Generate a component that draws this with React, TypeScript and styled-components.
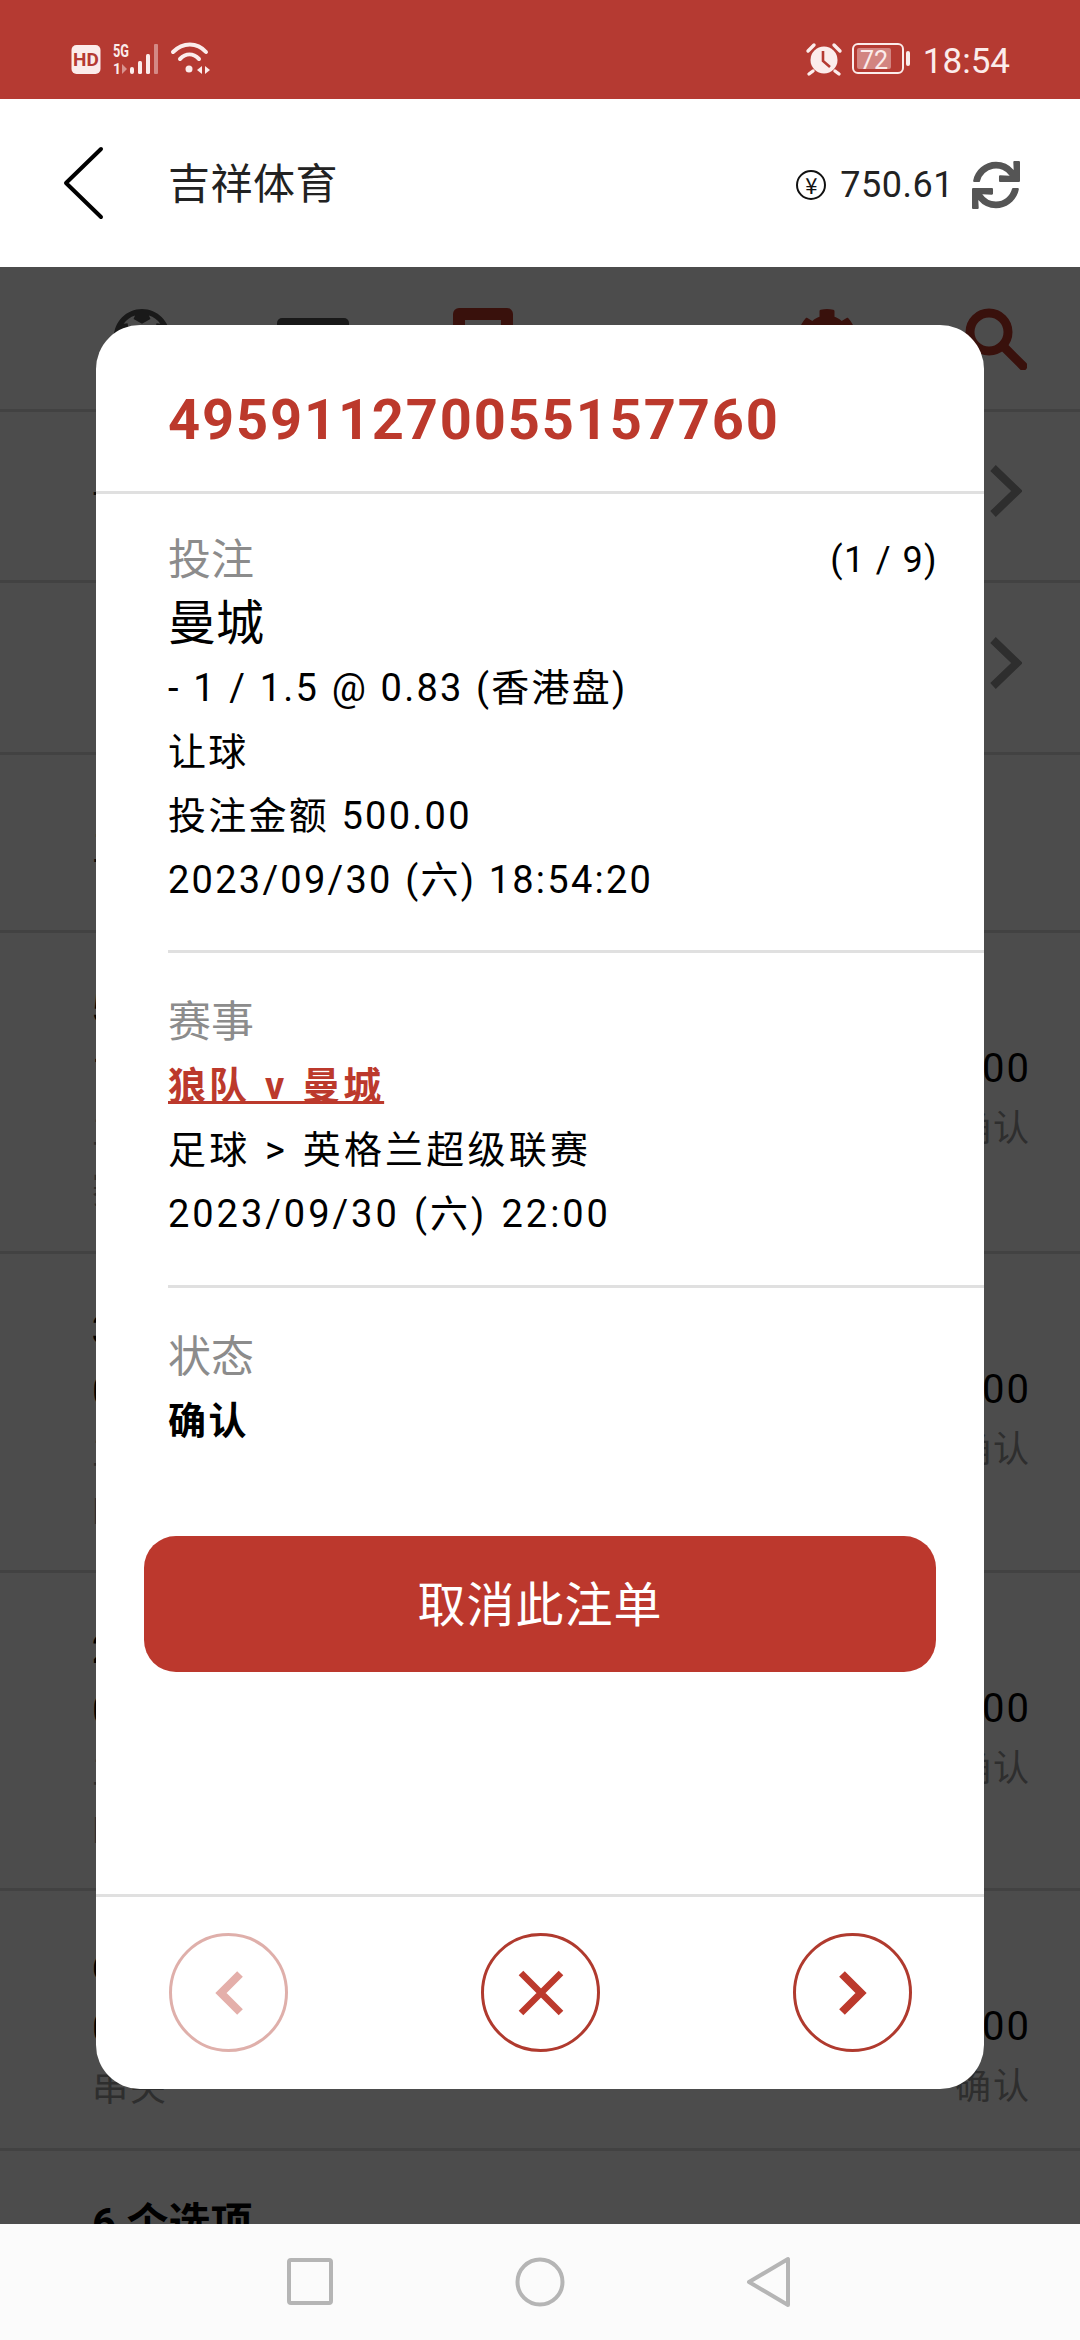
import React from "react";
import styled, { createGlobalStyle } from "styled-components";
import { FaSync, FaFutbol, FaCog } from "react-icons/fa";

const Global = createGlobalStyle`
  html, body { margin: 0; padding: 0; background: #fff; }
  * { box-sizing: border-box; }
  body { font-family: Roboto, "Noto Sans CJK SC", sans-serif; }
`;

const Screen = styled.div`
  width: 1080px; height: 2340px; display: flex; flex-direction: column; overflow: hidden;
`;

const StatusBar = styled.div`
  height: 99px; flex: none; background: #b53a32; color: #fbeceb;
  display: flex; justify-content: space-between; align-items: flex-start;
  padding: 42px 70px 0 71px;
  svg { overflow: visible; }
`;
const StatusGroup = styled.div`display: flex; align-items: flex-start; gap: 10px;`;
const Clock = styled.span`font-size: 35px; line-height: 36px; margin-left: 1px; margin-top: 2px;`;

const Header = styled.header`
  height: 168px; flex: none; background: #fff; display: flex; align-items: center; padding: 4px 60px 0 62px;
`;
const BackIcon = styled.svg`width: 44px; height: 76px; flex: none; margin-top: -5px;`;
const HeaderTitle = styled.h1`
  margin: 0 0 0 62px; flex: 1; font-size: 42px; font-weight: 400; color: #222; line-height: 48px; letter-spacing: 0.5px;
`;
const Balance = styled.div`display: flex; align-items: center; color: #222; font-size: 36px; letter-spacing: 0.5px;`;
const Yen = styled.span`
  width: 30px; height: 30px; border: 2px solid #111; border-radius: 50%; color: #111; font-size: 22px; line-height: 25px;
  text-align: center; letter-spacing: 0; margin-right: 14px; font-family: "Noto Sans CJK SC", sans-serif;
`;
const Refresh = styled(FaSync)`width: 48px; height: 48px; color: #555; margin-left: 18px;`;

const Body = styled.main`position: relative; flex: 1; min-height: 0; overflow: hidden; background: #fff;`;
const TabBar = styled.nav`
  height: 145px; display: flex; justify-content: space-between; padding: 41px 55px 0 112px; border-bottom: 3px solid #ddd;
`;
const Tab = styled.div<{ $red?: boolean }>`
  width: 60px; height: 60px; display: flex; justify-content: center; color: ${p => (p.$red ? "#c0392b" : "#555")};
  svg { flex: none; }
`;
const MenuRow = styled.div<{ $h: number }>`
  height: ${p => p.$h}px; border-bottom: 3px solid #ddd; display: flex; align-items: center; justify-content: space-between;
  padding: 0 58px 0 92px; font-size: 40px; color: #222;
`;
const Chevron = styled.svg`width: 32px; height: 54px; flex: none; color: #999; margin-bottom: 10px;`;
const BetRow = styled.div<{ $h: number }>`
  height: ${p => p.$h}px; border-bottom: 3px solid #ddd; display: flex; justify-content: space-between; padding: 46px 49px 0 92px;
`;
const BetLeft = styled.div`display: flex; flex-direction: column;`;
const BetRight = styled.div`display: flex; flex-direction: column; align-items: flex-end; padding-top: 60px;`;
const BetTitle = styled.div`font-size: 40px; line-height: 61px; font-weight: 700; color: #000;`;
const BetLine = styled.div`font-size: 40px; line-height: 61px; color: #000;`;
const BetSub = styled.div`font-size: 36px; line-height: 60px; color: #999; letter-spacing: 2px;`;
const Amount = styled.div`font-size: 40px; line-height: 60px; color: #000; letter-spacing: 2px;`;
const Options = styled.div`padding: 48px 92px; font-size: 42px; line-height: 50px; font-weight: 700; color: #000;`;

const Overlay = styled.div`
  position: absolute; inset: 0; background: rgba(0, 0, 0, 0.7); display: flex; justify-content: center; padding-top: 58px;
`;
const Modal = styled.section`
  width: 888px; height: 1764px; background: #fff; border-radius: 44px; display: flex; flex-direction: column; overflow: hidden;
`;
const ModalHead = styled.div`
  height: 169px; flex: none; border-bottom: 3px solid #e0e0e0; padding: 62px 0 0 72px;
  font-size: 56px; line-height: 66px; font-weight: 700; color: #bc392c; letter-spacing: 1.85px;
`;
const Section = styled.div<{ $top: number; $bottom?: number }>`
  position: relative; margin-left: 72px; padding: ${p => p.$top}px 0 ${p => p.$bottom ?? 0}px 0;
  border-bottom: ${p => (p.$bottom ? "3px solid #e0e0e0" : "none")};
`;
const Label = styled.div`font-size: 43px; line-height: 64px; color: #8c8c8c;`;
const Counter = styled.div`
  position: absolute; right: 46px; top: 34px; font-size: 36px; line-height: 64px; color: #000; letter-spacing: 1.4px;
`;
const Pick = styled.div`font-size: 48px; line-height: 64px; color: #000;`;
const Line = styled.div<{ $spacing?: number; $words?: number }>`
  font-size: 38px; line-height: 64px; color: #000;
  letter-spacing: ${p => p.$spacing ?? 2.25}px; word-spacing: ${p => p.$words ?? 0.8}px;
`;
const MatchLink = styled.a`
  display: block; font-size: 38px; line-height: 64px; font-weight: 700; color: #bc392c; text-decoration: underline;
  letter-spacing: 3px; word-spacing: 2.5px;
`;
const Strong = styled.div`font-size: 38px; line-height: 64px; font-weight: 700; color: #000; letter-spacing: 2.5px;`;
const CancelButton = styled.button`
  flex: none; margin: 83px 48px 0; height: 136px; border: none; border-radius: 32px; background: #bc382d; color: #fff;
  padding: 3px 0 0; font: 400 48px/1 Roboto, "Noto Sans CJK SC", sans-serif; letter-spacing: 1px;
`;
const Spacer = styled.div`flex: 1;`;
const ModalFoot = styled.footer`
  height: 195px; flex: none; border-top: 3px solid #e0e0e0; display: flex; justify-content: space-between; padding: 36px 72px 0 73px;
`;
const Circle = styled.button<{ $off?: boolean }>`
  width: 119px; height: 119px; border-radius: 50%; border: 3px solid #b03a2e; background: #fff; padding: 0;
  display: flex; align-items: center; justify-content: center; opacity: ${p => (p.$off ? 0.4 : 1)};
  svg { display: block; }
`;

const NavBar = styled.nav`
  height: 116px; flex: none; background: #fbfbfb; display: flex; justify-content: center; align-items: center; gap: 170px;
`;
const NavIcon = styled.svg`width: 60px; height: 60px; fill: none; stroke: #b5b5b5; stroke-width: 4;`;

const ScoreBets = [
  { h: 321, lines: ["5 个选项", "1 / 1.5", "主队", "赛果"] },
  { h: 319, lines: ["3 个选项", "0.00", "主队", "HK"] },
  { h: 318, lines: ["2 个选项", "0.00", "主队", "HK"] },
  { h: 260, lines: ["6 个选项", "0.00", "串关"] },
];

export default function App() {
  return (
    <Screen>
      <Global />
      <StatusBar>
        <StatusGroup>
          <svg width="30" height="32" viewBox="0 0 30 32">
            <rect x="0.5" y="3" width="29" height="29" rx="5" fill="#fbeceb" />
            <text x="15" y="24" textAnchor="middle" fontSize="19" fontWeight="700" fontFamily="Roboto" fill="#b53a32">HD</text>
          </svg>
          <svg width="50" height="34" viewBox="0 0 48 34" fill="#fbeceb" style={{ marginLeft: 1 }}>
            <text x="0" y="15" fontSize="19" fontWeight="700" fontFamily="Roboto" textLength="16" lengthAdjust="spacingAndGlyphs">5G</text>
            <text x="0" y="32" fontSize="14" fontWeight="700" fontFamily="Roboto">1</text>
            <path d="M9 22l5 5-5 5z" opacity="0.5" />
            <rect x="17" y="25" width="4" height="7" rx="2" />
            <rect x="25" y="19" width="4" height="13" rx="1.5" />
            <rect x="33" y="12" width="4" height="20" rx="1.5" />
            <rect x="41" y="2" width="4" height="30" rx="1" opacity="0.45" />
          </svg>
          <svg width="40" height="34" viewBox="0 0 40 34" fill="none" stroke="#fbeceb" strokeWidth="4" strokeLinecap="round" style={{ marginLeft: -1 }}>
            <path d="M2 10C12 0 26 0 35 10" />
            <path d="M9 17C15 11 22 11 28 17" />
            <circle cx="18" cy="27" r="3.5" fill="#fbeceb" stroke="none" />
            <path d="M31 24l-5 4 5 4z" fill="#fbeceb" stroke="none" />
            <path d="M34 24l5 4-5 4z" fill="#fbeceb" stroke="none" />
          </svg>
        </StatusGroup>
        <StatusGroup>
          <svg width="36" height="34" viewBox="0 0 36 34" fill="#fbeceb">
            <circle cx="18" cy="18" r="13.5" />
            <path d="M17 9v10l7 6" fill="none" stroke="#b53a32" strokeWidth="2.6" />
            <path d="M2 9l6-6M34 9l-6-6M7 29l-4 3M29 29l4 3" stroke="#fbeceb" strokeWidth="3.4" strokeLinecap="round" />
          </svg>
          <svg width="60" height="34" viewBox="0 0 60 34">
            <rect x="1" y="2" width="50" height="29" rx="5" fill="none" stroke="#fbeceb" strokeWidth="2" />
            <rect x="5" y="6" width="34" height="21" rx="2" fill="#fbeceb" opacity="0.42" />
            <text x="22" y="27" textAnchor="middle" fontSize="25" fontFamily="Roboto" fill="#fbeceb">72</text>
            <rect x="54" y="9" width="4" height="15" rx="2" fill="#fbeceb" />
          </svg>
          <Clock>18:54</Clock>
        </StatusGroup>
      </StatusBar>

      <Header>
        <BackIcon viewBox="0 0 44 76" fill="none" stroke="#000" strokeWidth="4" strokeLinecap="round" strokeLinejoin="round">
          <path d="M39 4L4 38l35 34" />
        </BackIcon>
        <HeaderTitle>吉祥体育</HeaderTitle>
        <Balance>
          <Yen>¥</Yen>
          750.61
          <Refresh />
        </Balance>
      </Header>

      <Body>
        <TabBar>
          <Tab><FaFutbol size={58} /></Tab>
          <Tab>
            <svg width="72" height="66" viewBox="0 0 72 66" fill="currentColor" style={{ marginTop: 10 }}>
              <rect width="72" height="60" rx="5" />
            </svg>
          </Tab>
          <Tab $red>
            <svg width="60" height="70" viewBox="0 0 60 70" fill="currentColor">
              <path fillRule="evenodd" d="M6 0h48a6 6 0 0 1 6 6v58a6 6 0 0 1-6 6H6a6 6 0 0 1-6-6V6a6 6 0 0 1 6-6zM12 12v46h36V12z" />
            </svg>
          </Tab>
          <Tab />
          <Tab $red><FaCog size={60} style={{ marginLeft: 5 }} /></Tab>
          <Tab $red>
            <svg width="62" height="62" viewBox="0 0 62 62" fill="none" stroke="currentColor" strokeLinecap="round" style={{ marginLeft: 2 }}>
              <circle cx="24" cy="24" r="19" strokeWidth="9" />
              <path d="M38 38l20 20" strokeWidth="9" />
            </svg>
          </Tab>
        </TabBar>
        <MenuRow $h={171}>
          <span>设置</span>
          <Chevron viewBox="0 0 32 54" fill="none" stroke="currentColor" strokeWidth="8"><path d="M3 4l24 23L3 50" /></Chevron>
        </MenuRow>
        <MenuRow $h={172}>
          <span />
          <Chevron viewBox="0 0 32 54" fill="none" stroke="currentColor" strokeWidth="8"><path d="M3 4l24 23L3 50" /></Chevron>
        </MenuRow>
        <MenuRow $h={178}><span>主</span></MenuRow>
        {ScoreBets.map((b, i) => (
          <BetRow key={i} $h={b.h}>
            <BetLeft>
              <BetTitle>{b.lines[0]}</BetTitle>
              <BetLine>{b.lines[1]}</BetLine>
              {b.lines.slice(2).map((t, j) => <BetSub key={j}>{t}</BetSub>)}
            </BetLeft>
            <BetRight>
              <Amount>500.00</Amount>
              <BetSub>确认</BetSub>
            </BetRight>
          </BetRow>
        ))}
        <Options>6 个选项</Options>

        <Overlay>
          <Modal>
            <ModalHead>495911270055157760</ModalHead>
            <Section $top={34} $bottom={38}>
              <Counter>(1 / 9)</Counter>
              <Label>投注</Label>
              <Pick>曼城</Pick>
              <Line>- 1 / 1.5 @ 0.83 (香港盘)</Line>
              <Line>让球</Line>
              <Line>投注金额 500.00</Line>
              <Line>2023/09/30 (六) 18:54:20</Line>
            </Section>
            <Section $top={37} $bottom={39}>
              <Label>赛事</Label>
              <MatchLink>狼队 v 曼城</MatchLink>
              <Line $spacing={3.2} $words={2}>足球 &gt; 英格兰超级联赛</Line>
              <Line $spacing={2.95} $words={2}>2023/09/30 (六) 22:00</Line>
            </Section>
            <Section $top={37}>
              <Label>状态</Label>
              <Strong>确认</Strong>
            </Section>
            <CancelButton>取消此注单</CancelButton>
            <Spacer />
            <ModalFoot>
              <Circle $off aria-label="上一个">
                <svg width="28" height="44" viewBox="0 0 28 44" fill="none" stroke="#bc392c" strokeWidth="8"><path d="M25 3L6 22l19 19" /></svg>
              </Circle>
              <Circle aria-label="关闭">
                <svg width="46" height="46" viewBox="0 0 46 46" fill="none" stroke="#bc392c" strokeWidth="6.5"><path d="M3 3l40 40M43 3L3 43" /></svg>
              </Circle>
              <Circle aria-label="下一个">
                <svg width="28" height="44" viewBox="0 0 28 44" fill="none" stroke="#bc392c" strokeWidth="8"><path d="M3 3l19 19L3 41" /></svg>
              </Circle>
            </ModalFoot>
          </Modal>
        </Overlay>
      </Body>

      <NavBar>
        <NavIcon viewBox="0 0 60 60"><rect x="9" y="8" width="42" height="43" rx="2" /></NavIcon>
        <NavIcon viewBox="0 0 60 60"><circle cx="30" cy="30" r="22.5" /></NavIcon>
        <NavIcon viewBox="0 0 60 60" strokeLinejoin="round"><path d="M48 7v46L9 30z" /></NavIcon>
      </NavBar>
    </Screen>
  );
}
